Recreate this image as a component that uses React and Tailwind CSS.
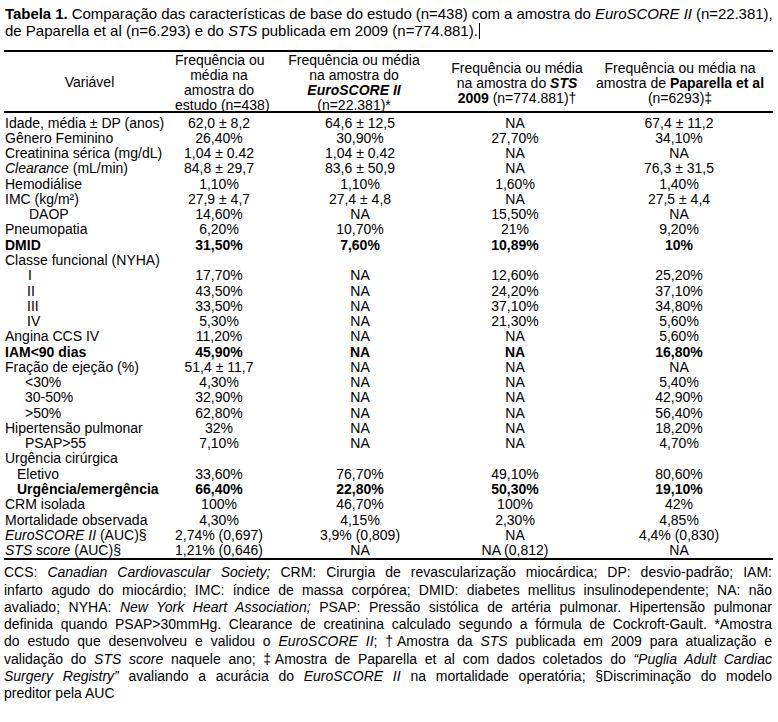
const rows = [
  { v: "Idade, média ± DP (anos)", d: ["62,0 ± 8,2", "64,6 ± 12,5", "NA", "67,4 ± 11,2"] },
  { v: "Gênero Feminino", d: ["26,40%", "30,90%", "27,70%", "34,10%"] },
  { v: "Creatinina sérica (mg/dL)", d: ["1,04 ± 0.42", "1,04 ± 0.42", "NA", "NA"] },
  { v: <><i>Clearance</i> (mL/min)</>, d: ["84,8 ± 29,7", "83,6 ± 50,9", "NA", "76,3 ± 31,5"] },
  { v: "Hemodiálise", d: ["1,10%", "1,10%", "1,60%", "1,40%"] },
  { v: "IMC (kg/m²)", d: ["27,9 ± 4,7", "27,4 ± 4,8", "NA", "27,5 ± 4,4"] },
  { v: "DAOP", indent: "pl-[25px]", d: ["14,60%", "NA", "15,50%", "NA"] },
  { v: "Pneumopatia", d: ["6,20%", "10,70%", "21%", "9,20%"] },
  { v: "DMID", bold: true, d: ["31,50%", "7,60%", "10,89%", "10%"] },
  { v: "Classe funcional (NYHA)", d: ["", "", "", ""] },
  { v: "I", indent: "pl-[24px]", d: ["17,70%", "NA", "12,60%", "25,20%"] },
  { v: "II", indent: "pl-[23px]", d: ["43,50%", "NA", "24,20%", "37,10%"] },
  { v: "III", indent: "pl-[23px]", d: ["33,50%", "NA", "37,10%", "34,80%"] },
  { v: "IV", indent: "pl-[23px]", d: ["5,30%", "NA", "21,30%", "5,60%"] },
  { v: "Angina CCS IV", d: ["11,20%", "NA", "NA", "5,60%"] },
  { v: "IAM<90 dias", bold: true, d: ["45,90%", "NA", "NA", "16,80%"] },
  { v: "Fração de ejeção (%)", d: ["51,4 ± 11,7", "NA", "NA", "NA"] },
  { v: "<30%", indent: "pl-[21px]", d: ["4,30%", "NA", "NA", "5,40%"] },
  { v: "30-50%", indent: "pl-[21px]", d: ["32,90%", "NA", "NA", "42,90%"] },
  { v: ">50%", indent: "pl-[21px]", d: ["62,80%", "NA", "NA", "56,40%"] },
  { v: "Hipertensão pulmonar", d: ["32%", "NA", "NA", "18,20%"] },
  { v: "PSAP>55", indent: "pl-[21px]", d: ["7,10%", "NA", "NA", "4,70%"] },
  { v: "Urgência cirúrgica", d: ["", "", "", ""] },
  { v: "Eletivo", indent: "pl-[13px]", d: ["33,60%", "76,70%", "49,10%", "80,60%"] },
  { v: "Urgência/emergência", indent: "pl-[13px]", bold: true, d: ["66,40%", "22,80%", "50,30%", "19,10%"] },
  { v: "CRM isolada", d: ["100%", "46,70%", "100%", "42%"] },
  { v: "Mortalidade observada", d: ["4,30%", "4,15%", "2,30%", "4,85%"] },
  { v: <><i>EuroSCORE II</i> (AUC)§</>, d: ["2,74% (0,697)", "3,9% (0,809)", "NA", "4,4% (0,830)"] },
  { v: <><i>STS score</i> (AUC)§</>, d: ["1,21% (0,646)", "NA", "NA (0,812)", "NA"] },
];

const notes = [
  <>CCS: <i>Canadian Cardiovascular Society;</i> CRM: Cirurgia de revascularização miocárdica; DP: desvio-padrão; IAM:</>,
  <>infarto agudo do miocárdio; IMC: índice de massa corpórea; DMID: diabetes mellitus insulinodependente; NA: não</>,
  <>avaliado; NYHA: <i>New York Heart Association;</i> PSAP: Pressão sistólica de artéria pulmonar. Hipertensão pulmonar</>,
  <>definida quando PSAP&gt;30mmHg. Clearance de creatinina calculado segundo a fórmula de Cockroft-Gault. *Amostra</>,
  <>do estudo que desenvolveu e validou o <i>EuroSCORE II</i>; †Amostra da <i>STS</i> publicada em 2009 para atualização e</>,
  <>validação do <i>STS score</i> naquele ano; ‡Amostra de Paparella et al com dados coletados do <i>“Puglia Adult Cardiac</i></>,
  <><i>Surgery Registry”</i> avaliando a acurácia do <i>EuroSCORE II</i> na mortalidade operatória; §Discriminação do modelo</>,
];

export default function App() {
  return (
    <div className="min-h-screen w-full bg-white text-black font-['Liberation_Sans',Arial,sans-serif] pt-[5px]">
      {/* Title */}
      <div className="pl-[5px] pr-[6px] text-[15px] leading-[17.3px] whitespace-nowrap">
        <div className="tracking-[-0.055px]">
          <b>Tabela 1.</b> Comparação das características de base do estudo (n=438) com a amostra do <i>EuroSCORE II</i> (n=22.381),
        </div>
        <div className="flex items-center">
          <span>de Paparella et al (n=6.293) e do <i>STS</i> publicada em 2009 (n=774.881).</span>
          <span className="inline-block w-px h-[16px] bg-black ml-[1px]"></span>
        </div>
      </div>

      {/* Table */}
      <div className="mx-[4px] w-[769px] mt-[10.5px] border-t-2 border-b-2 border-black text-[14px]">
        <div className="grid grid-cols-[171px_88px_182px_140px_188px] h-[61px] items-center text-center leading-[15px] whitespace-nowrap border-b-2 border-black">
          <div>Variável</div>
          <div className="pt-[1px]">Frequência ou<br />média na<br />amostra do<br />estudo (n=438)</div>
          <div className="pt-[1px]">Frequência ou média<br />na amostra do<br /><b><i>EuroSCORE II</i></b><br />(n=22.381)*</div>
          <div className="pl-[4px] pt-[1px]">Frequência ou média<br />na amostra do <b><i>STS</i></b><br /><b>2009</b> (n=774.881)†</div>
          <div className="pl-[2px] pt-[1px]">Frequência ou média na<br />amostra de <b>Paparella et al</b><br />(n=6293)‡</div>
        </div>
        <div className="pt-[2.5px]">
          {rows.map((r, i) => (
            <div
              key={i}
              className={`grid grid-cols-[171px_88px_182px_140px_188px] h-[15.27px] leading-[15.27px] whitespace-nowrap ${r.bold ? "font-bold" : ""}`}
            >
              <div className={r.indent || "pl-[1px]"}>{r.v}</div>
              <div className="text-center">{r.d[0]}</div>
              <div className="text-center pl-[12px]">{r.d[1]}</div>
              <div className="text-center">{r.d[2]}</div>
              <div className="text-center">{r.d[3]}</div>
            </div>
          ))}
        </div>
      </div>

      {/* Footnote */}
      <div className="pl-[4px] pr-[6px] pt-[4px] text-[14px] leading-[17.3px]">
        {notes.map((n, i) => (
          <div key={i} className="[text-align-last:justify]">{n}</div>
        ))}
        <div>preditor pela AUC</div>
      </div>
    </div>
  );
}
